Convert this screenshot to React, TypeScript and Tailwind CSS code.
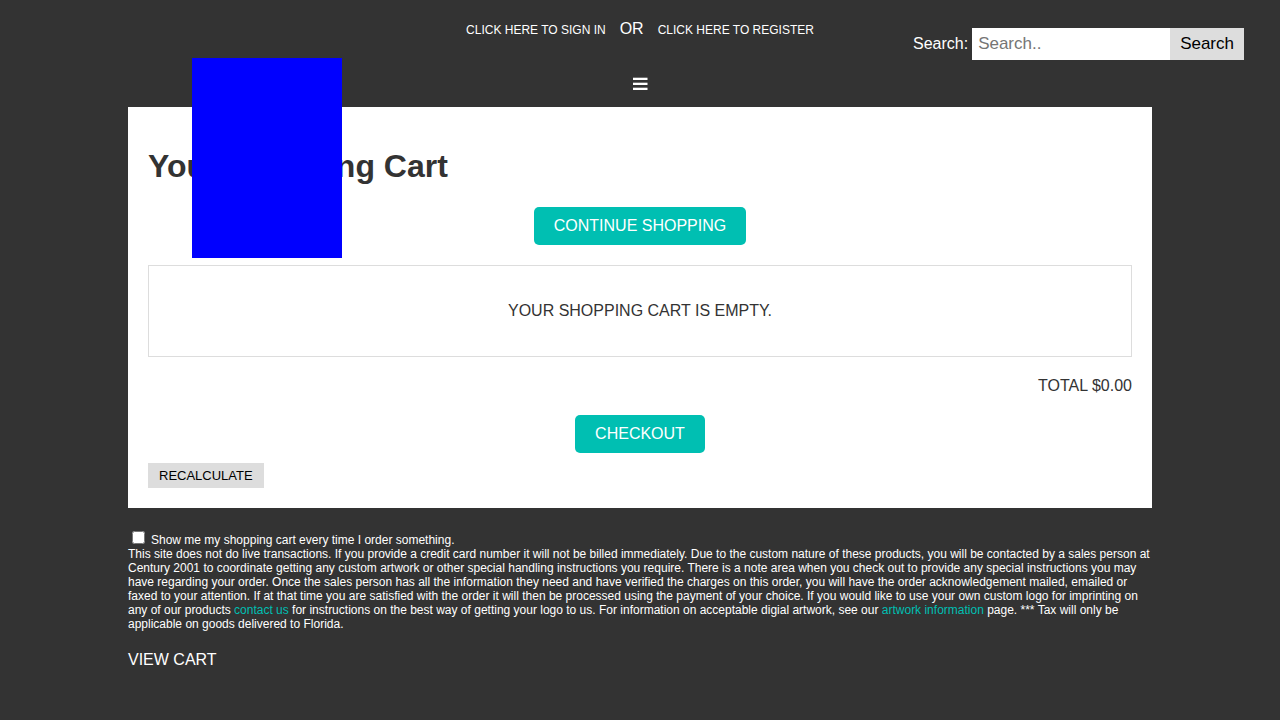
function MenuIcon() {
  return (
    <svg width="16" height="14" viewBox="0 0 16 14" fill="#fff" aria-hidden="true">
      <rect x="1" y="0.7" width="14.5" height="2.3" />
      <rect x="1" y="5.7" width="14.5" height="2.3" />
      <rect x="1" y="10.7" width="14.5" height="2.3" />
    </svg>
  );
}

function Header() {
  return (
    <header className="grid grid-cols-[1fr_auto_1fr] items-start pb-4">
      <div />
      <div className="flex flex-col items-center pt-5">
        <nav className="flex items-baseline gap-[14px]">
          <a href="#signin" className="text-xs leading-[18px]">CLICK HERE TO SIGN IN</a>
          <span>OR</span>
          <a href="#register" className="text-xs leading-[18px]">CLICK HERE TO REGISTER</a>
        </nav>
        <button type="button" aria-label="Menu" className="mt-[38px]">
          <MenuIcon />
        </button>
      </div>
      <form className="flex items-center justify-end pt-7 pr-9" onSubmit={(e) => e.preventDefault()}>
        <label htmlFor="search" className="mr-1">Search:</label>
        <input
          id="search"
          type="text"
          placeholder="Search.."
          className="h-8 w-[198px] bg-white px-[6px] text-[17px] text-black outline-none placeholder:text-[#757575]"
        />
        <button type="submit" className="h-8 bg-[#ddd] px-[10px] text-[17px] text-black">Search</button>
      </form>
    </header>
  );
}

function Cart() {
  return (
    <main className="bg-white p-5 text-[#333]">
      <h1 className="mt-5 mb-[22px] text-[32px] leading-[38px] font-bold">Your Shopping Cart</h1>
      <div className="flex justify-center">
        <a href="#shop" className="rounded-[5px] bg-[#00bfb2] px-5 py-[10px] text-white">CONTINUE SHOPPING</a>
      </div>
      <p className="my-5 border border-[#ddd] py-9 text-center">YOUR SHOPPING CART IS EMPTY.</p>
      <p className="text-right">TOTAL $0.00</p>
      <div className="mt-5 mb-[10px] flex justify-center">
        <a href="#checkout" className="rounded-[5px] bg-[#00bfb2] px-5 py-[10px] text-white">CHECKOUT</a>
      </div>
      <button type="button" className="block bg-[#ddd] px-[11px] py-[5px] text-[13px] leading-[15px] text-black">
        RECALCULATE
      </button>
    </main>
  );
}

export default function App() {
  return (
    <div className="relative min-h-screen bg-[#333] font-['Liberation_Sans',Arial,sans-serif] text-base leading-[18px] text-white">
      <Header />
      <div className="absolute top-[58px] left-[15%] h-[200px] w-[150px] bg-[#00f]" />
      <div className="mx-auto w-4/5">
        <Cart />
        <section className="pt-[23px] text-xs leading-[14px]">
          <div className="flex items-end">
            <input id="show-cart" type="checkbox" className="mx-1 mb-[3px] size-[13px]" />
            <label htmlFor="show-cart" className="ml-[2px]">Show me my shopping cart every time I order something.</label>
          </div>
          <p>
            This site does not do live transactions. If you provide a credit card number it will not be billed
            immediately. Due to the custom nature of these products, you will be contacted by a sales person at Century
            2001 to coordinate getting any custom artwork or other special handling instructions you require. There is a
            note area when you check out to provide any special instructions you may have regarding your order. Once the
            sales person has all the information they need and have verified the charges on this order, you will have the
            order acknowledgement mailed, emailed or faxed to your attention. If at that time you are satisfied with the
            order it will then be processed using the payment of your choice. If you would like to use your own custom
            logo for imprinting on any of our products{" "}
            <a href="#contact" className="text-[#00bfb2]">contact us</a> for instructions on the best way of getting your
            logo to us. For information on acceptable digial artwork, see our{" "}
            <a href="#artwork" className="text-[#00bfb2]">artwork information</a> page. *** Tax will only be applicable on
            goods delivered to Florida.
          </p>
        </section>
        <footer className="py-5">
          <a href="#cart">VIEW CART</a>
        </footer>
      </div>
    </div>
  );
}
